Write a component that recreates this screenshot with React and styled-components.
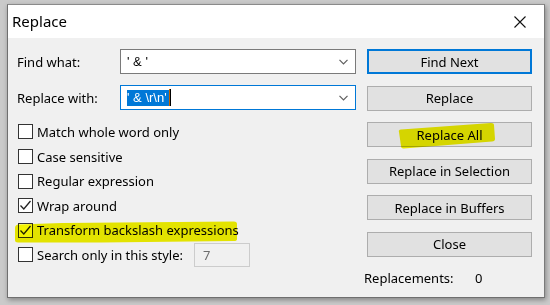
import React from "react";
import styled, { createGlobalStyle } from "styled-components";

const GlobalStyle = createGlobalStyle`
  html, body {
    margin: 0;
    padding: 0;
    width: 550px;
    height: 305px;
    overflow: hidden;
    background: #cacaca;
  }
  * { box-sizing: border-box; }
`;

const Screen = styled.div`
  width: 550px;
  height: 305px;
  padding: 4px 0 0 7px;
  font-family: "Noto Sans", "Open Sans", sans-serif;
  font-size: 13px;
  color: #000;
`;

const Window = styled.div`
  position: relative;
  width: 538px;
  height: 294px;
  background: #f0f0f0;
  border: 1px solid #6f6f6f;
  border-top-color: #8a8a8a;
  border-right-color: #7a7a7a;
  box-shadow: 1px 2px 5px rgba(0, 0, 0, 0.35);
  display: flex;
  flex-direction: column;
`;

const TitleBar = styled.div`
  height: 33px;
  background: #fff;
  display: flex;
  align-items: center;
  justify-content: space-between;
  padding-left: 4px;
`;

const Title = styled.span`
  font-size: 15px;
  color: #000;
  padding-bottom: 2px;
`;

const CloseX = styled.div`
  width: 46px;
  height: 33px;
  display: flex;
  align-items: center;
  justify-content: center;
  padding-right: 2px;
`;

const Body = styled.div`
  display: flex;
  padding: 11px 0 0 9px;
  gap: 10px;
  flex: 1;
`;

const LeftCol = styled.div`
  width: 340px;
  display: flex;
  flex-direction: column;
`;

const FieldRow = styled.div`
  display: grid;
  grid-template-columns: 103px 236px;
  align-items: center;
  height: 25px;
  margin-bottom: ${(p) => p.$mb || 0}px;
`;

const Label = styled.span`
  white-space: nowrap;
`;

const Combo = styled.div`
  height: 25px;
  background: #fff;
  border: 1px solid ${(p) => (p.$focused ? "#0078d7" : "#7a7a7a")};
  display: flex;
  align-items: center;
  padding: 0 7px 0 6px;
  font-family: "Liberation Sans", Arial, sans-serif;
  font-size: 13px;
`;

const ComboText = styled.span`
  flex: 1;
  display: flex;
  align-items: center;
  white-space: pre;
`;

const Selected = styled.span`
  background: #0078d7;
  color: #fff;
  height: 16px;
  line-height: 16px;
  padding: 0 2px 0 0;
  white-space: pre;
`;

const Caret = styled.span`
  width: 2px;
  height: 17px;
  background: #000;
  border-left: 1px solid #c06000;
`;

const Chevron = () => (
  <svg width="9" height="6" viewBox="0 0 9 6">
    <path d="M0.5 0.8 L4.5 4.8 L8.5 0.8" fill="none" stroke="#5f5f5f" strokeWidth="1.2" />
  </svg>
);

const CheckList = styled.div`
  margin-top: 9.7px;
  display: flex;
  flex-direction: column;
`;

const CheckRow = styled.div`
  height: 24.6px;
  display: flex;
  align-items: center;
  padding-left: 1px;
  white-space: nowrap;
`;

const Box = styled.span`
  width: 15px;
  height: 15px;
  border: 1px solid #333;
  background: #fff;
  margin-right: 4px;
  display: flex;
  align-items: center;
  justify-content: center;
  flex-shrink: 0;
`;

const StyleInput = styled.div`
  width: 56px;
  height: 24px;
  margin-left: 11px;
  border: 1px solid #cccccc;
  background: #f0f0f0;
  color: #6d6d6d;
  display: flex;
  align-items: center;
  padding-left: 8px;
`;

const RightCol = styled.div`
  width: 165px;
  display: flex;
  flex-direction: column;
  gap: 11.6px;
`;

const Button = styled.div`
  height: 25px;
  background: #e1e1e1;
  border: ${(p) => (p.$default ? "2px solid #0078d7" : "1px solid #adadad")};
  display: flex;
  align-items: center;
  justify-content: center;
  white-space: nowrap;
`;

const Counter = styled.div`
  display: grid;
  grid-template-columns: 111px auto;
  margin: -0.6px 0 0 -3px;
  height: 20px;
  align-items: center;
`;

const Marker = styled.svg`
  position: absolute;
  left: ${(p) => p.$x}px;
  top: ${(p) => p.$y}px;
  mix-blend-mode: multiply;
  pointer-events: none;
`;

const Check = ({ checked }) => (
  <Box>
    {checked && (
      <svg width="13" height="13" viewBox="0 0 13 13">
        <path d="M1.5 6.5 L4.8 10 L11.5 2" fill="none" stroke="#222" strokeWidth="1.3" />
      </svg>
    )}
  </Box>
);

export default function App() {
  return (
    <>
      <GlobalStyle />
      <Screen>
        <Window>
          <TitleBar>
            <Title>Replace</Title>
            <CloseX>
              <svg width="12" height="12" viewBox="0 0 12 12">
                <path d="M0.5 0.5 L11.5 11.5 M11.5 0.5 L0.5 11.5" stroke="#111" strokeWidth="1.1" />
              </svg>
            </CloseX>
          </TitleBar>
          <Body>
            <LeftCol>
              <FieldRow $mb={11}>
                <Label>Find what:</Label>
                <Combo>
                  <ComboText>' &amp; '</ComboText>
                  <Chevron />
                </Combo>
              </FieldRow>
              <FieldRow>
                <Label>Replace with:</Label>
                <Combo $focused>
                  <ComboText>
                    <Selected>{"' & \\r\\n'"}</Selected>
                    <Caret />
                  </ComboText>
                  <Chevron />
                </Combo>
              </FieldRow>
              <CheckList>
                <CheckRow><Check />Match whole word only</CheckRow>
                <CheckRow><Check />Case sensitive</CheckRow>
                <CheckRow><Check />Regular expression</CheckRow>
                <CheckRow><Check checked />Wrap around</CheckRow>
                <CheckRow><Check checked />Transform backslash expressions</CheckRow>
                <CheckRow>
                  <Check />Search only in this style:
                  <StyleInput>7</StyleInput>
                </CheckRow>
              </CheckList>
            </LeftCol>
            <RightCol>
              <Button $default>Find Next</Button>
              <Button>Replace</Button>
              <Button>Replace All</Button>
              <Button>Replace in Selection</Button>
              <Button>Replace in Buffers</Button>
              <Button>Close</Button>
              <Counter>
                <span>Replacements:</span>
                <span>0</span>
              </Counter>
            </RightCol>
          </Body>
          <Marker $x={6} $y={216} width="224" height="22" viewBox="0 0 224 22">
            <path d="M1 7 Q1 4 4 3.5 L48 2 L220 0.5 Q223 0.5 223 3 L223 18 Q223 20 220 20 L88 21.5 L4 21.5 Q1 21.5 1 19 Z" fill="#f2f200" />
          </Marker>
          <Marker $x={389} $y={117} width="99" height="28" viewBox="0 0 99 28">
            <path d="M2 10 Q1 8 4 7.5 L94 1 Q97 1 97 3 L98 17 Q98 19 95 19.5 L7 26.5 Q4 27 4 24 Z" fill="#f2f200" />
          </Marker>
        </Window>
      </Screen>
    </>
  );
}
